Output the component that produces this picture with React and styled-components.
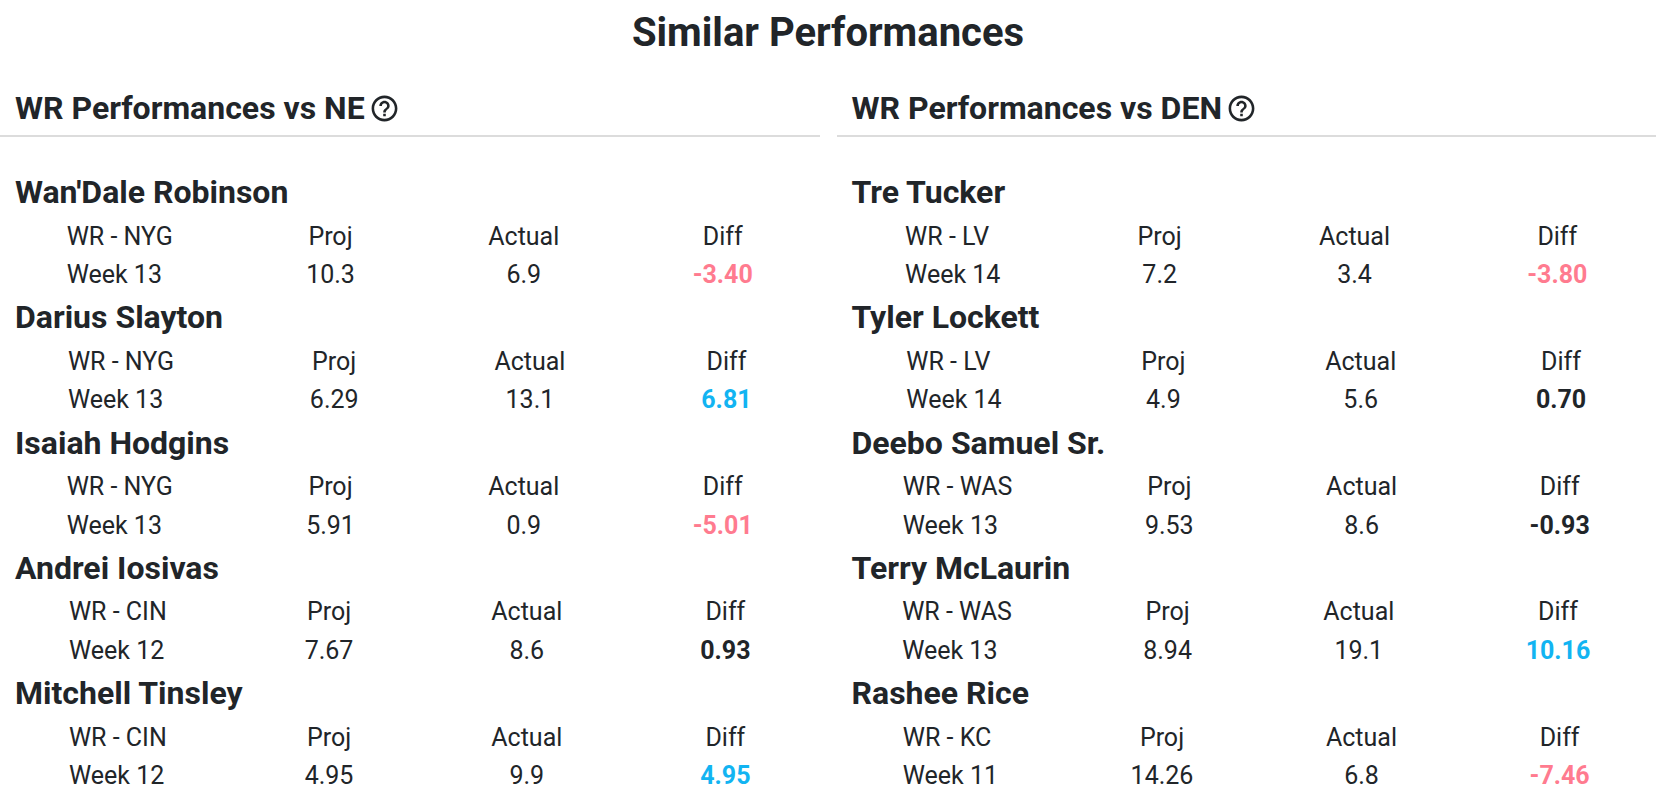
import React from 'react';
import styled, { createGlobalStyle } from 'styled-components';
import { MdHelpOutline } from 'react-icons/md';

const GlobalStyle = createGlobalStyle`
  html, body {
    margin: 0;
    padding: 0;
    background: #fff;
    overflow: hidden;
  }
  body {
    font-family: Roboto, "Liberation Sans", Arial, sans-serif;
    color: #212529;
  }
`;

const Page = styled.div`
  padding-top: 9px;
`;

const Title = styled.h1`
  margin: 0;
  font-size: 40px;
  line-height: 48px;
  font-weight: 700;
  text-align: center;
`;

const Columns = styled.div`
  display: grid;
  grid-template-columns: 1fr 1fr;
  column-gap: 17px;
  margin-top: 32px;
`;

const Panel = styled.section`
  display: flex;
  flex-direction: column;
`;

const PanelHeading = styled.h2`
  margin: 0;
  display: flex;
  align-items: center;
  padding: 0 0 8px 15px;
  font-size: 32px;
  line-height: 38px;
  font-weight: 700;
  border-bottom: 2px solid #dcdcdc;

  svg {
    margin-left: 4px;
    flex: none;
  }
`;

const List = styled.div`
  display: flex;
  flex-direction: column;
  gap: 3px;
  padding-top: 35px;
`;

const Player = styled.div`
  display: flex;
  flex-direction: column;
`;

const Name = styled.h3`
  margin: 0 0 5.5px;
  padding-left: 15px;
  font-size: 32px;
  line-height: 40px;
  font-weight: 700;
`;

const StatRow = styled.div`
  display: flex;
  justify-content: space-around;
`;

const StatCol = styled.div`
  display: flex;
  flex-direction: column;
  align-items: ${(p) => (p.$left ? 'flex-start' : 'center')};
  font-size: 25px;
  line-height: 38.4px;
`;

const Diff = styled.span`
  font-weight: 700;
  color: ${(p) => (p.$tone === 'down' ? '#ff7b8f' : p.$tone === 'up' ? '#12b4f2' : '#212529')};
`;

const panels = [
  {
    title: 'WR Performances vs NE',
    players: [
      { name: "Wan'Dale Robinson", team: 'NYG', week: 13, proj: '10.3', actual: '6.9', diff: -3.4 },
      { name: 'Darius Slayton', team: 'NYG', week: 13, proj: '6.29', actual: '13.1', diff: 6.81 },
      { name: 'Isaiah Hodgins', team: 'NYG', week: 13, proj: '5.91', actual: '0.9', diff: -5.01 },
      { name: 'Andrei Iosivas', team: 'CIN', week: 12, proj: '7.67', actual: '8.6', diff: 0.93 },
      { name: 'Mitchell Tinsley', team: 'CIN', week: 12, proj: '4.95', actual: '9.9', diff: 4.95 },
    ],
  },
  {
    title: 'WR Performances vs DEN',
    players: [
      { name: 'Tre Tucker', team: 'LV', week: 14, proj: '7.2', actual: '3.4', diff: -3.8 },
      { name: 'Tyler Lockett', team: 'LV', week: 14, proj: '4.9', actual: '5.6', diff: 0.7 },
      { name: 'Deebo Samuel Sr.', team: 'WAS', week: 13, proj: '9.53', actual: '8.6', diff: -0.93 },
      { name: 'Terry McLaurin', team: 'WAS', week: 13, proj: '8.94', actual: '19.1', diff: 10.16 },
      { name: 'Rashee Rice', team: 'KC', week: 11, proj: '14.26', actual: '6.8', diff: -7.46 },
    ],
  },
];

function tone(diff) {
  if (diff <= -2) return 'down';
  if (diff >= 2) return 'up';
  return 'flat';
}

function PlayerCard({ player }) {
  return (
    <Player>
      <Name>{player.name}</Name>
      <StatRow>
        <StatCol $left>
          <span>WR - {player.team}</span>
          <span>Week {player.week}</span>
        </StatCol>
        <StatCol>
          <span>Proj</span>
          <span>{player.proj}</span>
        </StatCol>
        <StatCol>
          <span>Actual</span>
          <span>{player.actual}</span>
        </StatCol>
        <StatCol>
          <span>Diff</span>
          <Diff $tone={tone(player.diff)}>{player.diff.toFixed(2)}</Diff>
        </StatCol>
      </StatRow>
    </Player>
  );
}

export default function App() {
  return (
    <Page>
      <GlobalStyle />
      <Title>Similar Performances</Title>
      <Columns>
        {panels.map((panel) => (
          <Panel key={panel.title}>
            <PanelHeading>
              {panel.title}
              <MdHelpOutline size={31} />
            </PanelHeading>
            <List>
              {panel.players.map((p) => (
                <PlayerCard key={p.name} player={p} />
              ))}
            </List>
          </Panel>
        ))}
      </Columns>
    </Page>
  );
}
